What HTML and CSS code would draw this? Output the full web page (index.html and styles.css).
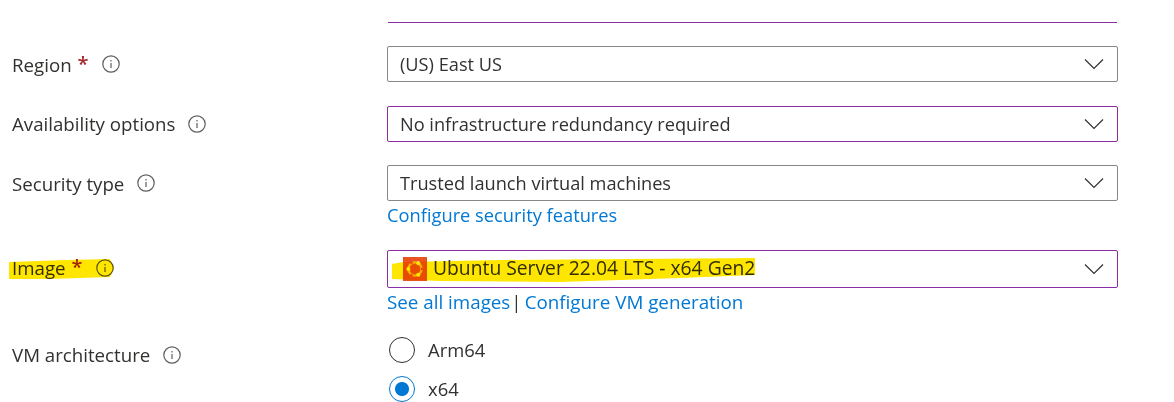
FILE: index.html
```html
<!DOCTYPE html>
<html lang="en">
<head>
<meta charset="utf-8">
<title>Create a virtual machine</title>
<link rel="stylesheet" href="styles.css">
</head>
<body>
<main class="form">
  <div class="row row-top">
    <div class="label"></div>
    <div class="field"><div class="cut-select"></div></div>
  </div>
  <div class="row row-region">
    <div class="label">Region<span class="req">*</span><svg class="info" viewBox="0 0 18 18"><circle cx="9" cy="9" r="8.2" /><path d="M9 8v5M9 5v1.6" /></svg></div>
    <div class="field"><div class="select"><span>(US) East US</span><svg class="chev" viewBox="0 0 20 12"><path d="M1 1.5l9 9 9-9" /></svg></div></div>
  </div>
  <div class="row row-avail">
    <div class="label label-up">Availability options<svg class="info" viewBox="0 0 18 18"><circle cx="9" cy="9" r="8.2" /><path d="M9 8v5M9 5v1.6" /></svg></div>
    <div class="field"><div class="select select-dirty"><span>No infrastructure redundancy required</span><svg class="chev" viewBox="0 0 20 12"><path d="M1 1.5l9 9 9-9" /></svg></div></div>
  </div>
  <div class="row row-security">
    <div class="label">Security type<svg class="info" viewBox="0 0 18 18"><circle cx="9" cy="9" r="8.2" /><path d="M9 8v5M9 5v1.6" /></svg></div>
    <div class="field"><div class="select"><span>Trusted launch virtual machines</span><svg class="chev" viewBox="0 0 20 12"><path d="M1 1.5l9 9 9-9" /></svg></div>
      <div class="links"><a href="#">Configure security features</a></div></div>
  </div>
  <div class="row row-image">
    <div class="label label-up">Image<span class="req">*</span><svg class="info" viewBox="0 0 18 18"><circle cx="9" cy="9" r="8.2" /><path d="M9 8v5M9 5v1.6" /></svg></div>
    <div class="field"><div class="select select-dirty select-image"><svg class="ubuntu" viewBox="0 0 24 24"><rect width="24" height="24" fill="#e95420"/><circle cx="12" cy="12" r="6.6" fill="none" stroke="#f9c21a" stroke-width="2.4"/><g fill="#e95420"><rect x="3" y="10.8" width="3" height="2.4" transform="rotate(60 12 12)"/><rect x="3" y="10.8" width="3" height="2.4" transform="rotate(180 12 12)"/><rect x="3" y="10.8" width="3" height="2.4" transform="rotate(300 12 12)"/></g><circle cx="5.4" cy="12" r="2" fill="#fff"/><circle cx="15.3" cy="6.3" r="2" fill="#fff"/><circle cx="15.3" cy="17.7" r="2" fill="#fff"/></svg><span>Ubuntu Server 22.04 LTS - x64 Gen2</span><svg class="chev" viewBox="0 0 20 12"><path d="M1 1.5l9 9 9-9" /></svg></div>
      <div class="links links-image"><a href="#">See all images</a><span class="sep">|</span><a href="#">Configure VM generation</a></div></div>
  </div>
  <div class="row row-arch">
    <div class="label label-up">VM architecture<svg class="info" viewBox="0 0 18 18"><circle cx="9" cy="9" r="8.2" /><path d="M9 8v5M9 5v1.6" /></svg></div>
    <div class="field radios">
      <div class="radio"><span class="dot"></span><span class="radio-text">Arm64</span></div>
      <div class="radio radio-on"><span class="dot"></span><span class="radio-text">x64</span></div>
    </div>
  </div>
</main>
<svg class="marker" viewBox="0 0 1174 402" aria-hidden="true">
  <path d="M9 262L66 260L110 259L114 268L110 277L50 279L9 279Z" />
  <path d="M392 264L403 262L500 260L755 258L755 275L680 278L560 282L440 281L392 279Z" />
</svg>
</body>
</html>
```
FILE: styles.css
```css
html, body { margin: 0; padding: 0; background: #fff; }
body {
  position: relative;
  width: 1174px;
  height: 402px;
  overflow: hidden;
  font-family: "Open Sans", "Noto Sans", "Liberation Sans", sans-serif;
  font-size: 18.2px;
  color: #323130;
}
.form { display: flex; flex-direction: column; }
.row { display: grid; grid-template-columns: 387px 731px; }
.row-top { height: 23px; }
.row-region { margin-top: 23px; }
.row-avail { margin-top: 24px; }
.row-security { margin-top: 23px; }
.row-image { margin-top: 23px; }
.row-arch { margin-top: 23px; }
.label {
  box-sizing: border-box;
  display: flex;
  align-items: center;
  height: 36px;
  padding-left: 12px;
  font-size: 18.7px;
  white-space: nowrap;
}
.label-up { padding-bottom: 2px; }
.label-up .info { margin-top: 2px; }
.req { color: #a4262c; margin-left: 6px; font-size: 20px; font-weight: 600; line-height: 1; }
.info {
  width: 18px;
  height: 18px;
  margin-left: 13px;
  fill: none;
  stroke: #605e5c;
  stroke-width: 1.2;
}
.cut-select { height: 22px; margin: 0 1px; border-bottom: 1px solid #8a2da5; }
.select {
  box-sizing: border-box;
  display: flex;
  align-items: center;
  height: 36px;
  padding-left: 12px;
  padding-right: 13px;
  border: 1px solid #8a8886;
  border-radius: 2px;
}
.select-dirty { border-color: #8a2da5; }
.select-image { height: 38px; padding-left: 15px; font-size: 19.3px; }
.select-image span { padding-bottom: 4px; }
.select span { flex: 1; white-space: nowrap; }
.chev { width: 20px; height: 12px; fill: none; stroke: #323130; stroke-width: 1.2; }
.ubuntu { width: 24px; height: 24px; margin-right: 6px; }
.links { height: 26px; line-height: 28px; white-space: nowrap; font-size: 18.3px; }
.links-image { display: flex; font-size: 18.8px; }
.links a { color: #0078d4; text-decoration: none; }
.sep { margin: 0 3px 0 1px; }
.radios { display: flex; flex-direction: column; gap: 13px; }
.radio { display: flex; align-items: center; height: 26px; font-size: 18.4px; }
.radio-text { padding-bottom: 2px; }
.dot {
  box-sizing: border-box;
  width: 26px;
  height: 26px;
  margin-left: 2px;
  margin-right: 13px;
  border: 1px solid #323130;
  border-radius: 50%;
}
.radio-on .dot {
  border-color: #0078d4;
  background: radial-gradient(circle, #0078d4 0 6.5px, #fff 7.5px);
}
.marker {
  position: absolute;
  left: 0;
  top: 0;
  width: 1174px;
  height: 402px;
  mix-blend-mode: multiply;
  pointer-events: none;
}
.marker path { fill: #ffe600; }
```
